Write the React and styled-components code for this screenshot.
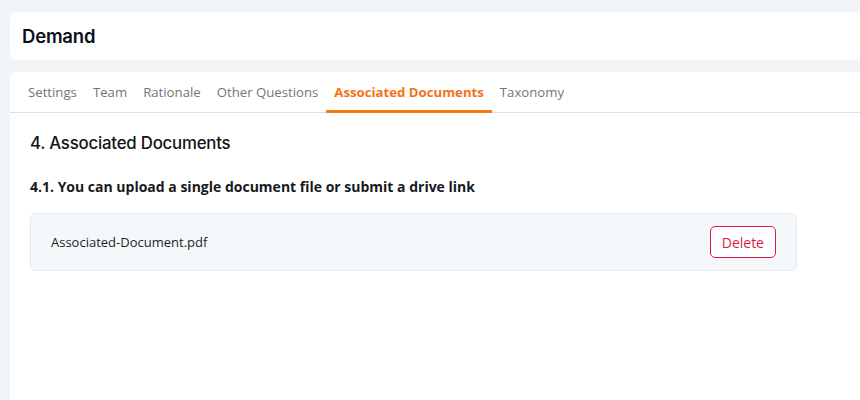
import React, { useState } from "react"
import styled, { createGlobalStyle } from "styled-components"

const tabs = [
  "Settings",
  "Team",
  "Rationale",
  "Other Questions",
  "Associated Documents",
  "Taxonomy",
]

export default function App() {
  const [active, setActive] = useState("Associated Documents")

  return (
    <>
      <GlobalStyle />
      <Page>
        <HeaderCard>
          <Title>Demand</Title>
        </HeaderCard>

        <MainCard>
          <TabList>
            {tabs.map(tab => (
              <Tab
                key={tab}
                $active={tab === active}
                onClick={() => setActive(tab)}
              >
                {tab}
              </Tab>
            ))}
          </TabList>

          <Section>
            <SectionTitle>4. Associated Documents</SectionTitle>
            <Question>4.1. You can upload a single document file or submit a drive link</Question>

            <FileRow>
              <FileName>Associated-Document.pdf</FileName>
              <DeleteButton>Delete</DeleteButton>
            </FileRow>
          </Section>
        </MainCard>
      </Page>
    </>
  )
}

const GlobalStyle = createGlobalStyle`
  html, body {
    margin: 0;
    padding: 0;
    background: #f1f5f8;
    overflow: hidden;
  }
  * {
    box-sizing: border-box;
  }
`

const Page = styled.div`
  display: flex;
  flex-direction: column;
  gap: 12px;
  padding: 12px 0 0 10px;
  height: 400px;
  margin-right: -30px;
`

const HeaderCard = styled.div`
  background: #ffffff;
  border-radius: 6px;
  height: 48px;
  display: flex;
  align-items: center;
  padding: 0 12px;
`

const Title = styled.h1`
  margin: 0;
  font-family: Inter, "Noto Sans", sans-serif;
  font-size: 18.5px;
  font-weight: 600;
  letter-spacing: -0.2px;
  color: #0b0f1a;
`

const MainCard = styled.div`
  flex: 1;
  background: #ffffff;
  border-radius: 6px 6px 0 0;
`

const TabList = styled.div`
  display: flex;
  padding: 0 10px;
  height: 41px;
  border-bottom: 1px solid #dcdfe3;
`

const Tab = styled.button`
  background: none;
  border: none;
  cursor: pointer;
  padding: 1px 8px 0;
  margin-bottom: -1px;
  font-family: "Open Sans", sans-serif;
  font-size: 13.2px;
  font-weight: ${p => (p.$active ? 700 : 400)};
  color: ${p => (p.$active ? "#f47216" : "#6f7680")};
  border-bottom: 3px solid ${p => (p.$active ? "#f77a10" : "transparent")};
`

const Section = styled.div`
  padding: 20px 20px 0;
`

const SectionTitle = styled.h2`
  margin: 0 0 24px;
  font-family: Inter, "Noto Sans", sans-serif;
  font-size: 16.8px;
  font-weight: 500;
  letter-spacing: -0.2px;
  color: #111418;
`

const Question = styled.h3`
  margin: 0 0 17px;
  font-family: "Open Sans", sans-serif;
  font-size: 14px;
  font-weight: 700;
  color: #17191d;
`

const FileRow = styled.div`
  width: 767px;
  height: 58px;
  display: flex;
  align-items: center;
  justify-content: space-between;
  padding: 0 20px;
  background: #f5f8fb;
  border: 1px solid #e5e8ec;
  border-radius: 6px;
`

const FileName = styled.span`
  font-family: "Open Sans", sans-serif;
  font-size: 13px;
  color: #1c1f24;
`

const DeleteButton = styled.button`
  height: 32px;
  padding: 0 11px;
  background: #ffffff;
  border: 1px solid #e0184a;
  border-radius: 5px;
  color: #e0184a;
  font-family: "Open Sans", sans-serif;
  font-size: 14px;
  cursor: pointer;
`
